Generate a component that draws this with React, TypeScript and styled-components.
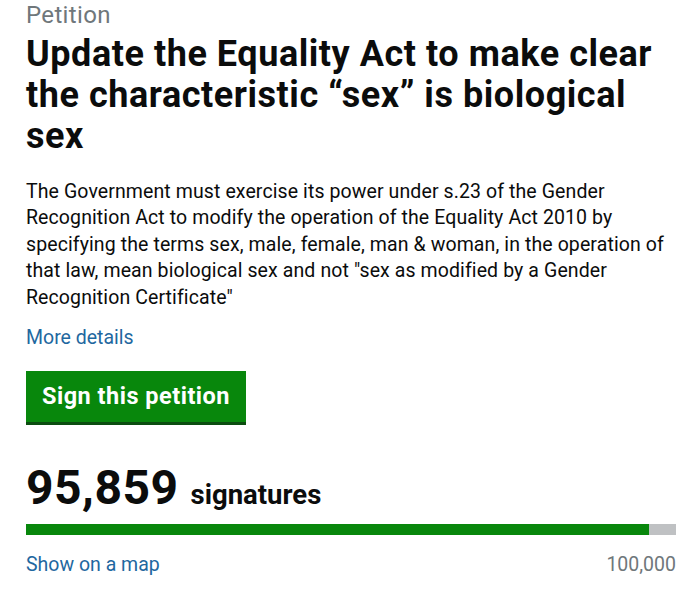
import React from "react";
import styled, { createGlobalStyle } from "styled-components";

const Global = createGlobalStyle`
  html, body { margin: 0; padding: 0; background: #ffffff; }
  body { font-family: Roboto, "Liberation Sans", Arial, sans-serif; color: #0b0c0c; }
  * { box-sizing: border-box; }
`;

const Page = styled.main`
  width: 693px;
  padding: 0 17px 0 26px;
  display: flex;
  flex-direction: column;
`;

const Kicker = styled.div`
  font-size: 24px;
  line-height: 30px;
  letter-spacing: 0.35px;
  color: #6f777b;
`;

const Title = styled.h1`
  margin: 4px 0 0;
  font-size: 36px;
  line-height: 41px;
  font-weight: 700;
  letter-spacing: 0.55px;
`;

const Body = styled.p`
  margin: 22px 0 0;
  font-size: 19.5px;
  line-height: 26.4px;
  letter-spacing: 0.1px;
`;

const Link = styled.a`
  color: #1f68a0;
  text-decoration: none;
  font-size: 19.5px;
  line-height: 26px;
`;

const MoreLink = styled(Link)`
  margin-top: 14px;
  align-self: flex-start;
`;

const Button = styled.button`
  align-self: flex-start;
  margin-top: 20px;
  width: 220px;
  height: 54px;
  padding: 0 0 2px;
  border: none;
  border-bottom: 3px solid #0b4d10;
  background: #08870c;
  color: #ffffff;
  font-family: Roboto, "Liberation Sans", Arial, sans-serif;
  font-size: 23.5px;
  font-weight: 700;
  letter-spacing: 0.5px;
  cursor: pointer;
`;

const CountRow = styled.div`
  margin-top: 37px;
  display: flex;
  align-items: baseline;
  gap: 12px;
`;

const Count = styled.span`
  font-size: 48px;
  line-height: 52px;
  font-weight: 700;
  letter-spacing: 0.5px;
`;

const CountLabel = styled.span`
  font-size: 27.5px;
  line-height: 30px;
  font-weight: 700;
`;

const Track = styled.div`
  margin-top: 10px;
  width: 650px;
  height: 11px;
  background: #bfc1c3;
`;

const Fill = styled.div`
  height: 100%;
  background: #08870c;
`;

const Footer = styled.div`
  margin-top: 17px;
  width: 650px;
  display: flex;
  justify-content: space-between;
  align-items: baseline;
`;

const Target = styled.span`
  color: #6f777b;
  font-size: 19.5px;
  line-height: 26px;
`;

export default function App() {
  const count = 95859;
  const target = 100000;
  return (
    <>
      <Global />
      <Page>
        <Kicker>Petition</Kicker>
        <Title>Update the Equality Act to make clear the characteristic “sex” is biological sex</Title>
        <Body>
          The Government must exercise its power under s.23 of the Gender Recognition Act to modify the operation of the
          Equality Act 2010 by specifying the terms sex, male, female, man &amp; woman, in the operation of that law, mean
          biological sex and not "sex as modified by a Gender Recognition Certificate"
        </Body>
        <MoreLink href="#">More details</MoreLink>
        <Button>Sign this petition</Button>
        <CountRow>
          <Count>95,859</Count>
          <CountLabel>signatures</CountLabel>
        </CountRow>
        <Track>
          <Fill style={{ width: `${(count / target) * 100}%` }} />
        </Track>
        <Footer>
          <Link href="#">Show on a map</Link>
          <Target>100,000</Target>
        </Footer>
      </Page>
    </>
  );
}
